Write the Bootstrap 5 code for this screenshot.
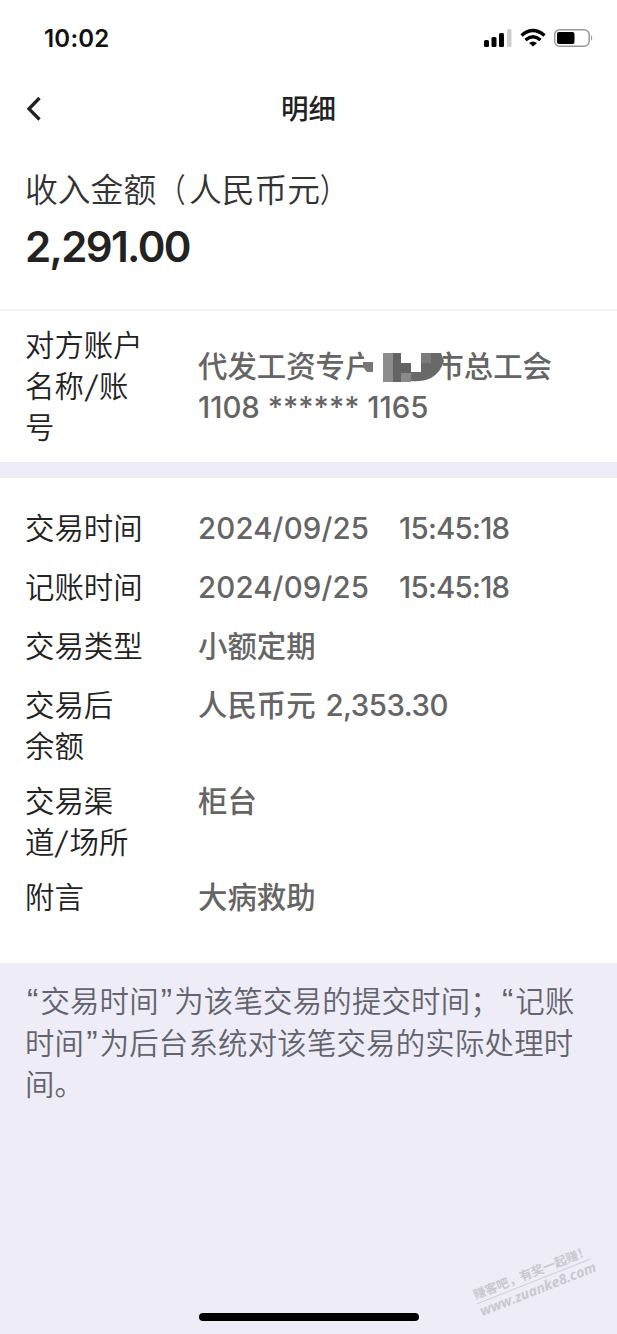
<!DOCTYPE html>
<html lang="zh-CN">
<head>
<meta charset="utf-8">
<meta name="viewport" content="width=device-width, initial-scale=1">
<title>明细</title>
<link rel="stylesheet" href="https://cdn.jsdelivr.net/npm/bootstrap@5.3.0/dist/css/bootstrap.min.css">
<style>
  body { font-family: Inter, "Noto Sans CJK SC", sans-serif; background: #eeedf7; color: #222; font-size: 29.4px; line-height: 41px; }
  .screen { height: 1334px; }
  .status { height: 76px; padding: 0 23px 0 44px; }
  .clock { font-size: 24px; font-weight: 600; color: #111; letter-spacing: .2px; }
  .titlebar { height: 66px; }
  .title-text { font-size: 27.5px; font-weight: 500; }
  .back { left: 25px; top: 20px; }
  .amount { height: 167px; padding: 27px 25px 0; }
  .amount-label { font-size: 32.8px; line-height: 42px; color: #333; font-weight: 350; }
  .paren { display: inline-block; transform: scaleX(.8); }
  .paren-close { transform-origin: left; }
  .amount-value { font-size: 42px; line-height: 50px; font-weight: 600; margin-top: 11px; letter-spacing: -1.65px; }
  .party { height: 153px; padding: 14px 25px 0; border-top: 2px solid #f3f3f5; }
  .party .item-value { padding-top: 21px; width: 354px; }
  .gap-band { height: 16px; }
  .details { height: 485px; padding: 30px 25px 0; }
  .item { min-height: 45px; margin-bottom: 14px; }
  .item-label { width: 173px; flex: none; font-weight: 350; }
  .item-value { color: #656565; font-weight: 500; }
  .item-value .dt { font-weight: 500; letter-spacing: .15px; }
  .item-value .tm { font-weight: 500; margin-left: 30px; letter-spacing: -.75px; }
  .num { font-weight: 500; margin-left: 2px; letter-spacing: -.45px; }
  .slash { display: inline-block; width: 15.2px; text-align: center; transform: scale(1.2, 1.05) skewX(-6deg); }
  .note { padding: 18px 25px 0; color: #63636d; line-height: 41.5px; font-weight: 350; letter-spacing: .22px; }
  .note q { quotes: none; display: inline-block; width: 15.4px; text-align: center; font-family: "Liberation Sans", sans-serif; font-size: 34px; line-height: 30px; }
  .mosaic { left: 165px; top: 23px; }
  .home { width: 220px; height: 8px; bottom: 13px; left: 199px; background: #000; }
  .stamp { left: 473px; bottom: 36px; width: 121px; transform: rotate(-21.5deg); color: #c9c8d0; font-size: 12.4px; line-height: 16px; font-weight: 700; }
  .stamp-top { border-bottom: 1px solid #cfced7; }
  .stamp-url { font-size: 14px; font-style: italic; font-family: "Open Sans", sans-serif; }
</style>
</head>
<body>
<main class="screen position-relative overflow-hidden">
  <header class="bg-white">
    <div class="status d-flex align-items-center justify-content-between">
      <span class="clock">10:02</span>
      <svg width="111" height="22" viewBox="0 0 111 22">
        <g fill="#000"><rect x="1" y="13" width="5" height="7" rx="1.500"/><rect x="8.500" y="10" width="5" height="10" rx="1.500"/><rect x="16" y="6" width="5" height="14" rx="1.500"/></g>
        <rect x="24" y="2" width="4.500" height="18" rx="1.500" fill="#cfcfcf"/>
        <g fill="none" stroke="#000" stroke-width="3.400"><path d="M38.500 8.500Q50-1.500 61.500 8.500"/><path d="M42.500 13Q50 6.500 57.500 13"/></g>
        <path d="M46 16q4-3.200 8 0l-4 3.600z" fill="#000"/>
        <rect x="71.700" y="2.700" width="34.500" height="16.600" rx="5" fill="none" stroke="#999" stroke-width="1.500"/>
        <rect x="74" y="5" width="17.500" height="12" rx="2" fill="#000"/>
        <path d="M108 8q2.500 3 0 6z" fill="#999"/>
      </svg>
    </div>
    <div class="titlebar position-relative d-flex align-items-center justify-content-center">
      <svg class="back position-absolute" width="18" height="26" viewBox="0 0 18 26"><path d="M14.500 2 4 12.800 14.500 23.500" fill="none" stroke="#222" stroke-width="3.300"/></svg>
      <span class="title-text">明细</span>
    </div>
  </header>

  <section class="amount bg-white">
    <div class="amount-label">收入金额<span class="paren">（</span>人民币元<span class="paren paren-close">）</span></div>
    <div class="amount-value">2,291.00</div>
  </section>

  <section class="party bg-white d-flex">
    <div class="item-label">对方账户<br>名称<span class="slash">/</span>账<br>号</div>
    <div class="item-value position-relative text-nowrap">
      <div class="d-flex justify-content-between"><span>代发工资专户</span><span>市总工会</span></div>
      <div>1108 ****** 1165</div>
      <svg class="mosaic position-absolute" width="84" height="36" viewBox="363 348 84 36">
        <path d="M364 348h79v36h-79z" fill="#fff"/>
        <path d="M363 362h10v10h-6l-4-5z" fill="#777"/>
        <path d="M383 353h10v29h-10z" fill="#8c8c8c"/>
        <path d="M393 353h8v10h10v10h-10v9h-8z" fill="#636363"/>
        <path d="M401 373h10v9h-10z" fill="#8a8a8a"/>
        <path d="M411 372h10v-19h20l3 8q-3 11-13 17-9 4-20 3z" fill="#696969"/>
        <path d="M421 353h10v10h-10z" fill="#7b7b7b"/>
      </svg>
    </div>
  </section>
  <div class="gap-band"></div>

  <section class="details bg-white">
    <div class="item d-flex"><div class="item-label">交易时间</div><div class="item-value"><span class="dt">2024/09/25</span><span class="tm">15:45:18</span></div></div>
    <div class="item d-flex"><div class="item-label">记账时间</div><div class="item-value"><span class="dt">2024/09/25</span><span class="tm">15:45:18</span></div></div>
    <div class="item d-flex"><div class="item-label">交易类型</div><div class="item-value">小额定期</div></div>
    <div class="item d-flex"><div class="item-label">交易后<br>余额</div><div class="item-value">人民币元 <span class="num">2,353.30</span></div></div>
    <div class="item d-flex"><div class="item-label">交易渠<br>道<span class="slash">/</span>场所</div><div class="item-value">柜台</div></div>
    <div class="item d-flex"><div class="item-label">附言</div><div class="item-value">大病救助</div></div>
  </section>

  <footer class="note text-nowrap"><q>“</q>交易时间<q>”</q>为该笔交易的提交时间；<q>“</q>记账<br>时间<q>”</q>为后台系统对该笔交易的实际处理时<br>间。</footer>

  <div class="stamp position-absolute text-nowrap"><div class="stamp-top">赚客吧，有奖一起赚！</div><div class="stamp-url">www.zuanke8.com</div></div>
  <div class="home position-absolute rounded-pill"></div>
</main>
<script src="https://cdn.jsdelivr.net/npm/bootstrap@5.3.0/dist/js/bootstrap.bundle.min.js"></script>
</body>
</html>
